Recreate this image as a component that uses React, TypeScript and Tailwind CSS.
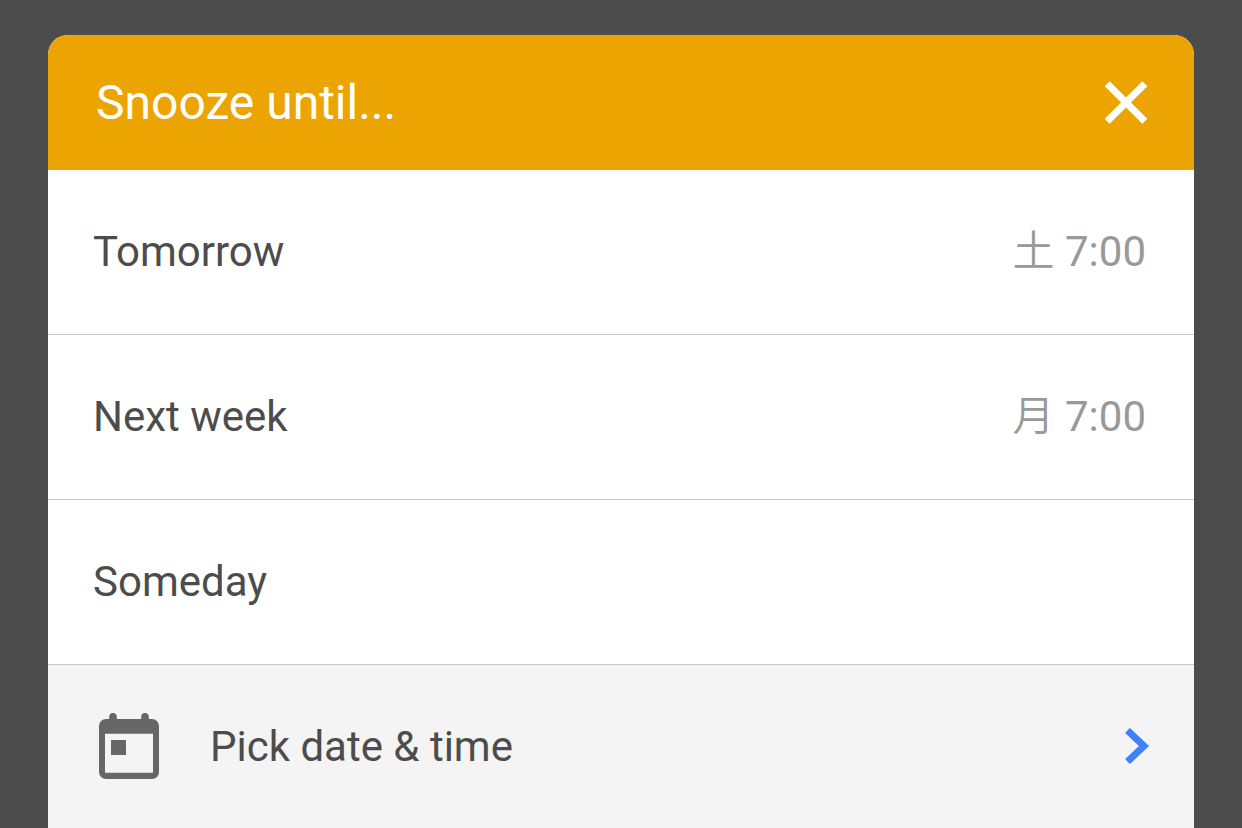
import React from 'react';

interface SnoozeOption {
  id: string;
  label: string;
  day?: string;
  time?: string;
}

const OPTIONS: SnoozeOption[] = [
  { id: 'tomorrow', label: 'Tomorrow', day: '土', time: '7:00' },
  { id: 'next-week', label: 'Next week', day: '月', time: '7:00' },
  { id: 'someday', label: 'Someday' },
];

const CloseIcon: React.FC = () => (
  <svg viewBox="0 0 44 44" className="size-11" aria-hidden="true">
    <path d="M3.2 2.700 40.8 40.300M40.8 2.700 3.2 40.300" stroke="#fff" strokeWidth="7" fill="none" />
  </svg>
);

const CalendarIcon: React.FC = () => (
  <svg viewBox="0 0 62 67" className="h-[67px] w-[62px]" aria-hidden="true">
    <path
      fill="#666"
      fillRule="evenodd"
      d="M11.200 6V3.800a3.800 3.800 0 0 1 7.600 0V6H43.200V3.800a3.800 3.800 0 0 1 7.600 0V6H54a7 7 0 0 1 7 7V59a7 7 0 0 1-7 7H8a7 7 0 0 1-7-7V13a7 7 0 0 1 7-7ZM7 20.700V59.800H55V20.700ZM13 27H28V42H13Z"
    />
  </svg>
);

const ChevronIcon: React.FC = () => (
  <svg viewBox="0 0 26 37" className="h-[37px] w-[26px]" aria-hidden="true">
    <path d="M3.500 2.500 20 18 3.500 33.500" stroke="#4080ff" strokeWidth="7" fill="none" />
  </svg>
);

const OptionRow: React.FC<{ option: SnoozeOption }> = ({ option }) => (
  <li className="border-b border-[#c8c8c8]">
    <button type="button" className="flex h-41 w-full items-center justify-between pr-12 pl-[45px] text-left">
      <span>{option.label}</span>
      {option.time && (
        <span className="text-[#999]">
          <span lang="ja" className="font-[350]">{option.day}</span> {option.time}
        </span>
      )}
    </button>
  </li>
);

export default function App() {
  return (
    <main className="min-h-screen bg-[#4c4c4c] px-12 pt-[35px] font-['Roboto','Noto_Sans_CJK_JP',sans-serif] text-[42px] leading-[48px] text-[#4c4c4c]">
      <section role="dialog" aria-labelledby="snooze-title" className="overflow-hidden rounded-t-[20px] bg-white">
        <header className="flex h-[135px] items-center justify-between bg-[#eca403] pr-[46px] pl-12 text-white">
          <h1 id="snooze-title" className="text-[48px]">Snooze until...</h1>
          <button type="button" aria-label="Close">
            <CloseIcon />
          </button>
        </header>
        <ul>
          {OPTIONS.map(option => (
            <OptionRow key={option.id} option={option} />
          ))}
        </ul>
        <button type="button" className="flex h-[163px] w-full items-center bg-[#f4f4f4] pr-11 pl-[50px] text-left">
          <CalendarIcon />
          <span className="ml-[50px] grow">Pick date &amp; time</span>
          <ChevronIcon />
        </button>
      </section>
    </main>
  );
}
